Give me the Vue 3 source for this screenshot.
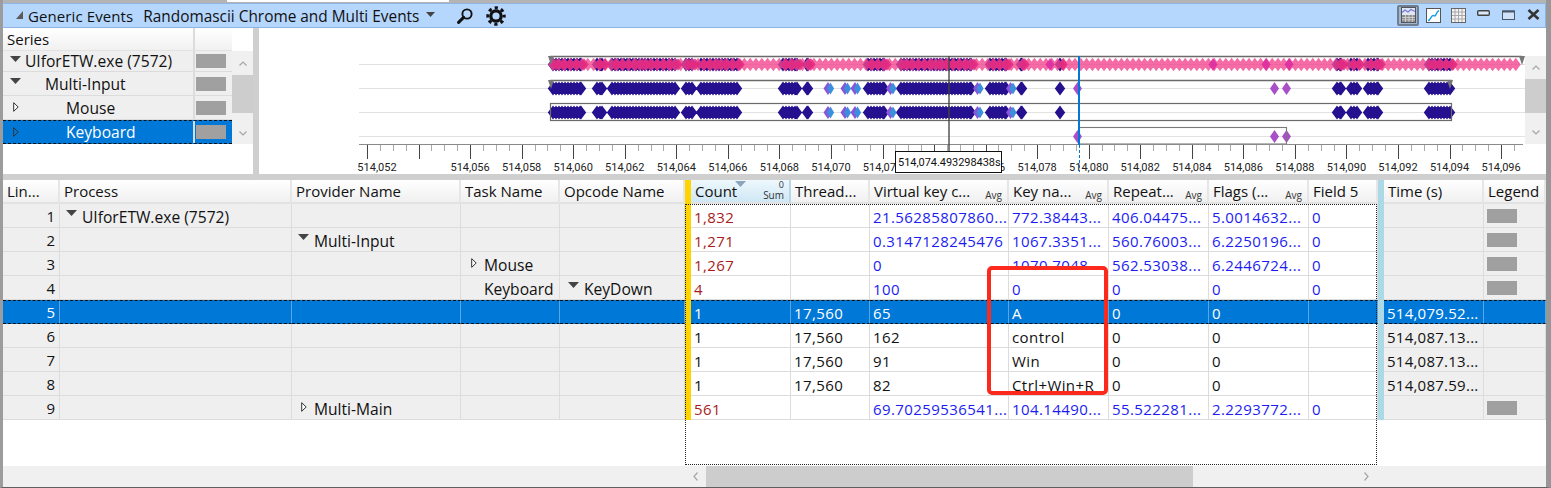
<script setup>
// Series tree on the left of the graph
const series = [
  { name: 'UIforETW.exe (7572)', icon: 'down', indent: 4 },
  { name: 'Multi-Input', icon: 'down', indent: 24 },
  { name: 'Mouse', icon: 'right', indent: 45 },
  { name: 'Keyboard', icon: 'right', indent: 45, selected: true },
]

// Table columns, widths in px
const columns = [
  { title: 'Lin...', w: 57 },
  { title: 'Process', w: 232 },
  { title: 'Provider Name', w: 169 },
  { title: 'Task Name', w: 99 },
  { title: 'Opcode Name', w: 125 },
  { bar: 'yellow', w: 6 },
  { title: 'Count', w: 100, sorted: true },
  { title: 'Thread...', w: 79 },
  { title: 'Virtual key c...', w: 139, avg: true },
  { title: 'Key na...', w: 100, avg: true },
  { title: 'Repeat...', w: 100, avg: true },
  { title: 'Flags (...', w: 100, avg: true },
  { title: 'Field 5', w: 69 },
  { bar: 'blue', w: 6 },
  { title: 'Time (s)', w: 100 },
  { title: 'Legend', w: 62 },
]
const gridColumns = columns.map((c) => c.w + 'px').join(' ')

const rows = [
  { tree: [{ t: 'UIforETW.exe (7572)', icon: 'down' }, null, null, null], count: '1,832', thread: '', data: ['21.56285807860...', '772.38443...', '406.04475...', '5.0014632...', '0'], time: '', swatch: true },
  { tree: [null, { t: 'Multi-Input', icon: 'down' }, null, null], count: '1,271', thread: '', data: ['0.3147128245476', '1067.3351...', '560.76003...', '6.2250196...', '0'], time: '', swatch: true },
  { tree: [null, null, { t: 'Mouse', icon: 'right' }, null], count: '1,267', thread: '', data: ['0', '1070.7048...', '562.53038...', '6.2446724...', '0'], time: '', swatch: true },
  { tree: [null, null, { t: 'Keyboard' }, { t: 'KeyDown', icon: 'down' }], count: '4', thread: '', data: ['100', '0', '0', '0', '0'], time: '', swatch: true },
  { tree: [null, null, null, null], count: '1', thread: '17,560', data: ['65', 'A', '0', '0', ''], time: '514,079.52...', leaf: true, selected: true },
  { tree: [null, null, null, null], count: '1', thread: '17,560', data: ['162', 'control', '0', '0', ''], time: '514,087.13...', leaf: true },
  { tree: [null, null, null, null], count: '1', thread: '17,560', data: ['91', 'Win', '0', '0', ''], time: '514,087.13...', leaf: true },
  { tree: [null, null, null, null], count: '1', thread: '17,560', data: ['82', 'Ctrl+Win+R', '0', '0', ''], time: '514,087.59...', leaf: true },
  { tree: [null, { t: 'Multi-Main', icon: 'right' }, null, null], count: '561', thread: '', data: ['69.70259536541...', '104.14490...', '55.522281...', '2.2293772...', '0'], time: '', swatch: true },
]

// --- graph, drawn in page coordinates (viewBox starts at 259,28) ---
const diamond = (x, y, hw = 4.5, hh = 6.5) => `M${x - hw} ${y}L${x} ${y - hh}L${x + hw} ${y}L${x} ${y + hh}Z`

const darkRanges = [
  [553, 581], [597, 602], [612, 675], [686, 692], [701, 737], [783, 797], [807, 808],
  [868, 884], [901, 971], [990, 1006], [1021, 1022], [1060, 1060],
  [1337, 1341], [1351, 1357], [1368, 1378], [1429, 1450],
]
const lightBlue = [829.5, 846.5, 856.5, 892, 979, 1012]
const purple = [1079, 1276, 1288]

const spread = (ranges, step) => {
  const out = []
  for (const [a, b] of ranges) {
    for (let x = a; x <= b; x += step) out.push(x)
    if (out[out.length - 1] !== b) out.push(b)
  }
  return out
}

const darkXs = spread(darkRanges, 3)
const darkPath = (y) => darkXs.map((x) => diamond(x, y, 5.2, 7)).join('')
const purplePath = (xs, y) => xs.map((x) => diamond(x - 1.5, y)).join('')
const bluePath = (y) => lightBlue.map((x) => diamond(x + 1, y, 3.6, 6)).join('')

const pinkXs = []
for (let x = 553; x < 1521; x += 5.8) pinkXs.push(x)
const pinkPath = pinkXs.map((x) => diamond(x, 64.5, 5, 6.8)).join('')
const pinkDense = spread(darkRanges, 7).map((x) => diamond(x + 3, 64.5, 4.6, 6.3)).join('')
const pinkSpots = [1050, 1213, 1266, 1289].map((x) => diamond(x, 64.5)).join('')

const grid = [64, 88, 112, 136]

const majors = []
for (let i = 0; i < 23; i++) majors.push(367 + i * 51.55)
const minors = []
for (let x = 367; x < 1524; x += 51.55 / 4) minors.push(x)

// 514,054 is dropped by the axis, 514,074 sits under the cursor tooltip
const labels = majors
  .map((x, i) => ({ x, t: '514,' + String(52 + i * 2).padStart(3, '0') }))
  .filter((l) => l.t !== '514,054' && l.t !== '514,074')
labels[0].x = 377
</script>

<template>
  <div class="window">
    <div class="topstrip"><span class="tab"></span></div>

    <!-- Title bar -->
    <div class="titlebar">
      <svg class="collapse" width="7" height="8" viewBox="0 0 7 8"><path d="M7 0V8H0Z" fill="#5a5a5a" /></svg>
      <span class="title">Generic Events</span>
      <span class="preset">Randomascii Chrome and Multi Events</span>
      <svg class="drop" width="9" height="5" viewBox="0 0 9 5"><path d="M0 0H9L4.5 5Z" fill="#444" /></svg>
      <svg class="search" width="16" height="16" viewBox="0 0 16 16">
        <circle cx="10" cy="6" r="4.6" fill="none" stroke="#111" stroke-width="1.9" />
        <path d="M6.6 9.4L1.6 14.4" stroke="#111" stroke-width="3" stroke-linecap="round" />
      </svg>
      <svg class="gear" width="20" height="20" viewBox="0 0 20 20">
        <circle cx="10" cy="10" r="5.2" fill="none" stroke="#111" stroke-width="3.2" />
        <circle cx="10" cy="10" r="8.2" fill="none" stroke="#111" stroke-width="3" stroke-dasharray="3.22 3.22" stroke-dashoffset="1.6" />
      </svg>
      <div class="winbtns">
        <span class="activebtn">
          <svg width="15" height="16" viewBox="0 0 15 16">
            <rect x=".5" y=".5" width="14" height="15" fill="#dfe6f5" stroke="#555" />
            <path d="M1 5.5L4 3L7 5L10 2.5L14 4.5" fill="none" stroke="#7a78d8" stroke-width="1.3" />
            <rect x="1" y="8" width="13" height="7" fill="#8c8c8c" />
            <path d="M1 10.5H14M1 12.8H14M4.5 8V15M8 8V15M11.3 8V15" stroke="#d8d8d8" stroke-width=".8" />
          </svg>
        </span>
        <svg class="graphicon" width="15" height="15" viewBox="0 0 15 15">
          <rect x=".5" y=".5" width="14" height="14" fill="#fff" stroke="#555" />
          <path d="M2 12.5C4.5 12.5 5 7.5 7 7.5S9 9 10 6.5S11.5 3 13 2.5" fill="none" stroke="#1ba1e2" stroke-width="1.5" />
        </svg>
        <svg class="gridicon" width="15" height="15" viewBox="0 0 15 15">
          <rect x=".5" y=".5" width="14" height="14" fill="#f3f3f3" stroke="#666" />
          <path d="M1 4H14M1 7.5H14M1 11H14M4 1V14M7.5 1V14M11 1V14" stroke="#a8a8a8" stroke-width="1" />
        </svg>
        <svg class="minicon" width="13" height="6" viewBox="0 0 13 6">
          <rect x=".7" y=".7" width="11.6" height="4.6" rx="1" fill="#dbe8f8" stroke="#444" stroke-width="1.4" />
        </svg>
        <svg class="maxicon" width="13" height="10" viewBox="0 0 13 10">
          <rect x=".5" y="1" width="12" height="8.5" fill="#cfe2fa" stroke="#4a5668" />
          <rect x=".5" y=".5" width="12" height="2" fill="#4a5668" />
        </svg>
        <svg class="closeicon" width="13" height="11" viewBox="0 0 13 11">
          <path d="M1.5 1L11.5 10M11.5 1L1.5 10" stroke="#333" stroke-width="2.6" />
        </svg>
      </div>
    </div>

    <!-- Graph area -->
    <div class="chart">
      <div class="series">
        <div class="series-head"><span class="series-name">Series</span><span class="series-col"></span></div>
        <div v-for="s in series" :key="s.name" class="series-row" :class="{ selected: s.selected }">
          <div class="series-name">
            <span class="twisty">
              <svg v-if="s.icon === 'down'" width="11" height="6" viewBox="0 0 11 6"><path d="M0 0H11L5.5 6Z" fill="#444" /></svg>
              <svg v-else class="tri-right" width="6" height="10" viewBox="0 0 6 10"><path d="M.7 .7L5.2 5L.7 9.3Z" :fill="s.selected ? '#0078d7' : '#fff'" stroke="#333" /></svg>
            </span>
            <span :style="{ marginLeft: s.indent + 'px' }">{{ s.name }}</span>
          </div>
          <div class="series-col"><i class="swatch"></i></div>
        </div>
      </div>
      <div class="vscroll series-scroll">
        <svg width="8" height="5" viewBox="0 0 8 5"><path d="M.5 4.5L4 1L7.5 4.5" fill="none" stroke="#a6a6a6" stroke-width="1.2" /></svg>
        <i class="thumb"></i>
        <svg width="8" height="5" viewBox="0 0 8 5"><path d="M.5 .5L4 4L7.5 .5" fill="none" stroke="#a6a6a6" stroke-width="1.2" /></svg>
      </div>
      <div class="vsplit"></div>

      <svg class="graph" width="1266" height="146" viewBox="259 28 1266 146">
        <path v-for="y in grid" :key="y" :d="`M359 ${y + 0.5}H1525`" stroke="#e2e2e2" />

        <!-- row 1: everything, pink on top -->
        <path :d="darkPath(64.5)" fill="#25108f" />
        <path :d="pinkPath" fill="#f2468f" opacity=".8" />
        <path :d="pinkDense" fill="#e5287f" opacity=".85" />
        <path :d="pinkSpots" fill="#d826a0" opacity=".8" />

        <!-- row 2: multi-input -->
        <path :d="darkPath(88.5)" fill="#25108f" />
        <path :d="purplePath(lightBlue, 88.5)" fill="#8a55d8" />
        <path :d="bluePath(88.5)" fill="#3c8fdc" />
        <path :d="purplePath(purple, 88.5)" fill="#a94fc8" />

        <!-- row 3: mouse -->
        <path :d="darkPath(112.5)" fill="#25108f" />
        <path :d="purplePath(lightBlue, 112.5)" fill="#8a55d8" />
        <path :d="bluePath(112.5)" fill="#3c8fdc" />

        <!-- row 4: keyboard -->
        <path :d="purplePath(purple, 136.5)" fill="#a94fc8" />

        <!-- selection outlines -->
        <path d="M550 56.5H1522" stroke="#6a6a6a" stroke-width="1.4" />
        <path d="M550 80.5H1452" stroke="#6a6a6a" stroke-width="1.4" />
        <rect x="550.5" y="103.5" width="901" height="17" fill="none" stroke="#6a6a6a" stroke-width="1.2" />
        <rect x="1079.5" y="127.5" width="207" height="16.5" fill="none" stroke="#7a7a7a" stroke-width="1.1" />
        <path d="M548 56H554L551 65ZM1519 56H1525L1522 65ZM548 80H554L551 89ZM1447 80H1453L1450 89Z" fill="#777" />

        <!-- axis -->
        <path d="M359 144.5H1523" stroke="#8a8a8a" />
        <path v-for="x in minors" :key="'m' + x" :d="`M${Math.round(x) + 0.5} 145V151`" stroke="#aaa" />
        <path v-for="x in majors" :key="'M' + x" :d="`M${Math.round(x) + 0.5} 145V159`" stroke="#444" />
        <text v-for="l in labels" :key="l.t" :x="l.x" y="171" text-anchor="middle" class="ticktext">{{ l.t }}</text>

        <!-- cursor lines -->
        <path d="M949 56V152" stroke="#444" stroke-width="1.6" opacity=".85" />
        <path d="M1079 56V145" stroke="#0078d7" stroke-width="2" />
        <path d="M1079.5 145V172" stroke="#0078d7" stroke-dasharray="3 2" />

        <rect x="895.5" y="151.5" width="106" height="21" fill="#fff" stroke="#111" />
        <text x="898" y="166" class="tiptext">514,074.493298438s</text>
      </svg>

      <div class="graph-side">
        <div class="vscroll graph-scroll">
          <svg width="8" height="5" viewBox="0 0 8 5"><path d="M.5 4.5L4 1L7.5 4.5" fill="none" stroke="#a6a6a6" stroke-width="1.2" /></svg>
          <i class="thumb"></i>
          <svg width="8" height="5" viewBox="0 0 8 5"><path d="M.5 .5L4 4L7.5 .5" fill="none" stroke="#a6a6a6" stroke-width="1.2" /></svg>
        </div>
      </div>
    </div>

    <div class="hsplit"></div>

    <!-- Table -->
    <div class="table">
      <div class="thead" :style="{ gridTemplateColumns: gridColumns }">
        <div
          v-for="c in columns"
          :key="c.title || c.bar"
          class="th"
          :class="[c.bar ? 'bar-' + c.bar : '', { sorted: c.sorted }]"
        >
          <template v-if="!c.bar">
            <span>{{ c.title }}</span>
            <span v-if="c.avg" class="agg">Avg</span>
            <template v-if="c.sorted">
              <svg class="sortmark" width="11" height="6" viewBox="0 0 11 6"><path d="M0 0H11L5.5 6Z" fill="#8aa5bd" /></svg>
              <span class="sumval">0</span>
              <span class="agg">Sum</span>
            </template>
          </template>
        </div>
      </div>

      <div
        v-for="(r, i) in rows"
        :key="i"
        class="tr"
        :class="{ selected: r.selected }"
        :style="{ gridTemplateColumns: gridColumns }"
      >
        <div class="td frozen lineno">{{ i + 1 }}</div>
        <div v-for="(c, j) in r.tree" :key="j" class="td frozen treecell">
          <template v-if="c">
            <span class="twisty">
              <svg v-if="c.icon === 'down'" width="11" height="6" viewBox="0 0 11 6"><path d="M0 0H11L5.5 6Z" fill="#444" /></svg>
              <svg v-else-if="c.icon === 'right'" class="tri-right" width="6" height="10" viewBox="0 0 6 10"><path d="M.7 .7L5.2 5L.7 9.3Z" fill="#fff" stroke="#333" /></svg>
            </span>
            <span>{{ c.t }}</span>
          </template>
        </div>
        <div class="bar-yellow"></div>
        <div class="td num" :class="{ sum: !r.leaf }">{{ r.count }}</div>
        <div class="td num">{{ r.thread }}</div>
        <div v-for="(d, j) in r.data" :key="'d' + j" class="td num" :class="{ avg: !r.leaf }">{{ d }}</div>
        <div class="bar-blue"></div>
        <div class="td frozen num time">{{ r.time }}</div>
        <div class="td frozen legend"><i v-if="r.swatch" class="swatch"></i></div>
      </div>

      <div class="table-gap"></div>

      <div class="hscroll">
        <svg width="5" height="9" viewBox="0 0 5 9"><path d="M4.5 .5L1 4.5L4.5 8.5" fill="none" stroke="#a6a6a6" stroke-width="1.2" /></svg>
        <i class="hthumb"></i>
        <svg width="5" height="9" viewBox="0 0 5 9"><path d="M.5 .5L4 4.5L.5 8.5" fill="none" stroke="#a6a6a6" stroke-width="1.2" /></svg>
      </div>

      <!-- selection outline and the hand drawn red box on top of the table -->
      <div class="dotted"></div>
      <div class="redmask"></div>
      <div class="redbox"></div>
    </div>
  </div>
</template>

<style scoped>
.window {
  width: 1551px;
  height: 488px;
  box-sizing: border-box;
  display: flex;
  flex-direction: column;
  background: #fff;
  border-left: 3px solid #9c9c9c;
  border-right: 5px solid #979797;
  border-bottom: 1px solid #5f5f5f;
  font-family: "Open Sans", "Noto Sans", sans-serif;
  font-size: 15px;
  color: #111;
  overflow: hidden;
}

.topstrip {
  height: 3px;
  flex: none;
  background: #b4b4b4;
  position: relative;
}

.tab {
  position: absolute;
  left: 224px;
  top: 0;
  width: 222px;
  height: 2px;
  background: #fff;
}

.titlebar {
  height: 25px;
  flex: none;
  box-sizing: border-box;
  display: flex;
  align-items: center;
  background: #b5d6fd;
  border: 1px solid #8fb4e2;
  border-left-color: #b5d6fd;
}

.collapse {
  margin-left: 12px;
  margin-top: -2px;
}

.title {
  margin-left: 5px;
  letter-spacing: .1px;
}

.preset {
  margin-left: 10px;
  margin-top: 1px;
  font-size: 15.4px;
}

.drop {
  margin-left: 7px;
  margin-top: -2px;
}

.search {
  margin-left: 22px;
}

.gear {
  margin-left: 13px;
}

.winbtns {
  margin-left: auto;
  display: flex;
  align-items: center;
  margin-top: -1px;
  padding-right: 5px;
}

.activebtn {
  width: 22px;
  height: 21px;
  box-sizing: border-box;
  display: flex;
  align-items: center;
  justify-content: center;
  background: #9fb6d2;
  border: 2px solid #6f7f92;
  border-radius: 2px;
}

.graphicon {
  margin-left: 7px;
}

.gridicon {
  margin-left: 10px;
}

.minicon {
  margin-left: 11px;
  margin-top: -5px;
}

.maxicon {
  margin-left: 12px;
  margin-top: -1px;
}

.closeicon {
  margin-left: 12px;
  margin-top: -1px;
}

.chart {
  height: 146px;
  flex: none;
  display: flex;
}

.series {
  width: 229px;
  flex: none;
}

.series-head {
  height: 23px;
  display: flex;
  align-items: center;
  background: linear-gradient(#fff, #f1f1f1);
  border-bottom: 1px solid #e2e2e2;
  box-sizing: border-box;
}

.series-head .series-name {
  padding-left: 4px;
  background: none;
}

.series-name {
  width: 192px;
  height: 100%;
  flex: none;
  box-sizing: border-box;
  display: flex;
  align-items: center;
  border-right: 2px solid #dcdcdc;
  background: #efefef;
}

.series-col {
  flex: 1;
  height: 100%;
  display: flex;
  align-items: center;
  padding-left: 1px;
}

.series-row {
  height: 24px;
  box-sizing: border-box;
  display: flex;
  background: #efefef;
  border-bottom: 1px solid #dcdcdc;
  font-size: 15.6px;
}

.series-head + .series-row {
  height: 21px;
}

.series-row .twisty {
  width: 11px;
  margin-left: 7px;
  margin-top: -5px;
  display: flex;
  justify-content: center;
}

.tri-right {
  position: relative;
  top: 2px;
}

.series-row.selected {
  background: #0078d7;
  border-top: 1px dashed #111;
  border-bottom: 1px dashed #111;
}

.series-row.selected .series-name {
  background: #0078d7;
  color: #fff;
}

.swatch {
  display: block;
  width: 30px;
  height: 14px;
  background: #a0a0a0;
}

.vscroll {
  width: 21px;
  flex: none;
  box-sizing: border-box;
  display: flex;
  flex-direction: column;
  align-items: center;
  background: #f0f0f0;
}

.vscroll .thumb {
  display: block;
  width: 100%;
  background: #cdcdcd;
}

.series-scroll {
  margin-top: 23px;
  height: 93px;
  padding-top: 10px;
}

.series-scroll .thumb {
  height: 38px;
  margin: 9px 0 18px;
}

.vsplit {
  width: 6px;
  flex: none;
  background: #cfcfcf;
}

.graph {
  display: block;
  flex: none;
}

.ticktext {
  font-size: 11px;
  font-family: Roboto, sans-serif;
  fill: #222;
}

.tiptext {
  font-size: 11px;
  font-family: Roboto, sans-serif;
  letter-spacing: -.05px;
  fill: #111;
}

.graph-side {
  width: 21px;
  flex: none;
  padding-top: 28px;
}

.graph-scroll {
  height: 88px;
  padding-top: 9px;
}

.graph-scroll .thumb {
  height: 34px;
  margin: 9px 0 17px;
}

.hsplit {
  height: 6px;
  flex: none;
  background: #cfcfcf;
}

.table {
  flex: 1;
  min-height: 0;
  display: flex;
  flex-direction: column;
  position: relative;
}

.thead {
  height: 24px;
  flex: none;
  display: grid;
}

.th {
  box-sizing: border-box;
  display: flex;
  justify-content: space-between;
  padding: 0 5px 0 4px;
  line-height: 22px;
  white-space: nowrap;
  background: linear-gradient(#fff, #f0f0f0);
  border-right: 2px solid #e6e6e6;
  border-bottom: 2px solid #e2e2e2;
  position: relative;
}

.th.sorted {
  background: linear-gradient(#eef8fd, #cfe7f5);
  border-right-color: #b5d7ea;
}

.bar-yellow {
  background: #ffd400;
  padding: 0;
  border: 0;
}

.bar-blue {
  background: #add8e6;
  padding: 0;
  border: 0;
}

.agg {
  font-size: 10px;
  line-height: 10px;
  align-self: flex-end;
  margin-bottom: 2px;
  color: #333;
}

.sortmark {
  position: absolute;
  left: 44px;
  top: 1px;
}

.sumval {
  position: absolute;
  right: 5px;
  top: 1px;
  font-size: 9px;
  line-height: 8px;
  color: #333;
}

.tr {
  height: 24px;
  flex: none;
  display: grid;
}

.td {
  box-sizing: border-box;
  padding-left: 3px;
  display: flex;
  align-items: center;
  white-space: nowrap;
  overflow: hidden;
  border-right: 1px solid #dcdcdc;
  border-bottom: 1.5px solid #dcdcdc;
}

.frozen {
  background: #efefef;
}

.lineno {
  justify-content: flex-end;
  padding-right: 4px;
}

.treecell {
  padding-left: 6px;
  font-size: 15.6px;
}

.treecell:nth-child(4) {
  padding-left: 7px;
}

.treecell:nth-child(5) {
  padding-left: 8px;
}

.treecell .tri-right {
  left: 3px;
}

.twisty {
  width: 16px;
  flex: none;
  display: flex;
  margin-top: -6px;
}

.num {
  letter-spacing: .42px;
  padding-top: 2px;
}

.time {
  letter-spacing: .25px;
}

.treecell span:last-child {
  padding-top: 2px;
}

.sum {
  color: #a81c1c;
}

.avg {
  color: #1c1cf0;
}

.legend {
  padding-left: 3px;
}

.tr.selected .td {
  background: #0078d7;
  color: #fff;
  border-right-color: #5aa5e4;
  border-top: 1px dashed #111;
  border-bottom: 1px dashed #111;
}

.table-gap {
  flex: 1;
}

.hscroll {
  height: 21px;
  flex: none;
  display: flex;
  align-items: center;
  background: #f0f0f0;
  padding-left: 690px;
}

.hthumb {
  display: block;
  width: 487px;
  height: 100%;
  margin: 0 171px 0 8px;
  background: #cdcdcd;
}

.dotted {
  position: absolute;
  left: 682px;
  top: 24px;
  width: 692px;
  height: 261px;
  box-sizing: border-box;
  border: 1px dotted #222;
  pointer-events: none;
}

.redmask {
  position: absolute;
  left: 1006px;
  top: 89px;
  width: 96px;
  height: 6px;
  background: #fff;
}

.redbox {
  position: absolute;
  left: 984px;
  top: 86px;
  width: 121px;
  height: 129px;
  box-sizing: border-box;
  border: 4px solid #fb2a1c;
  border-radius: 5px;
}
</style>
